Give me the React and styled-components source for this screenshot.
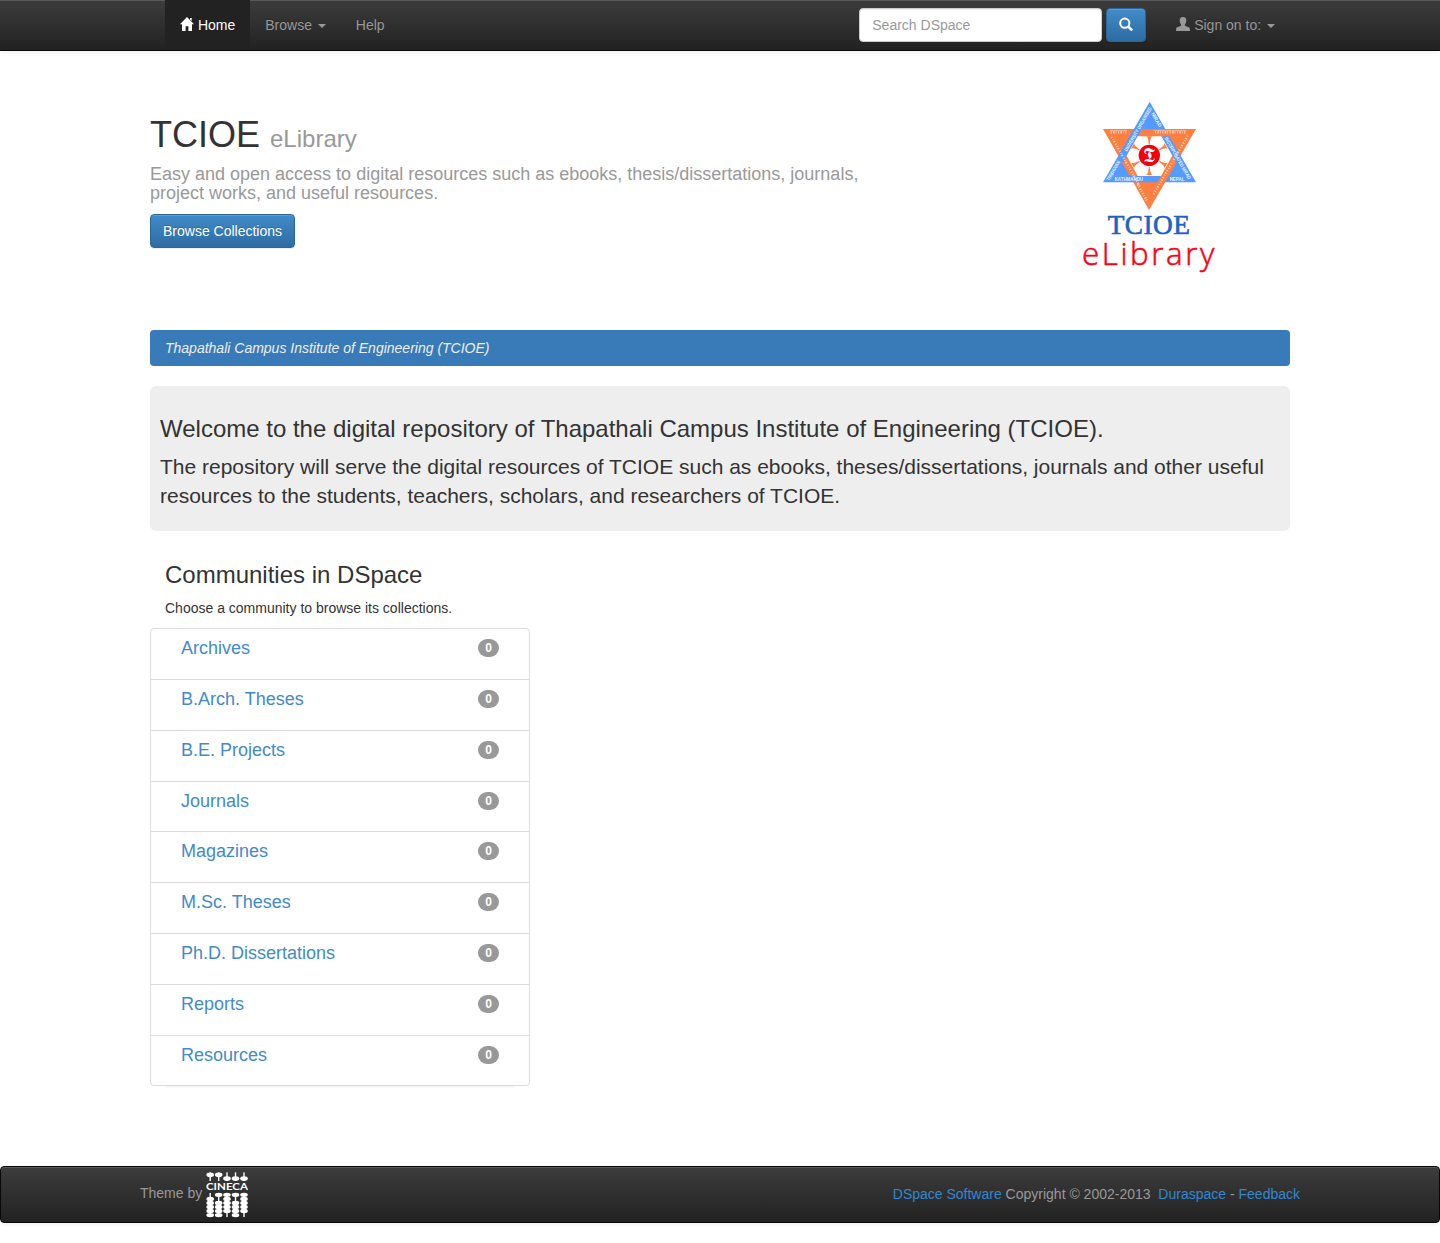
import React from "react";
import styled, { createGlobalStyle } from "styled-components";

const GlobalStyle = createGlobalStyle`
  *, *::before, *::after { box-sizing: border-box; }
  body {
    margin: 0;
    background: #fff;
    color: #333;
    font: 14px/1.428571429 "Liberation Sans", Arial, sans-serif;
  }
  a { color: #428bca; text-decoration: none; }
  h1, h3, h4, p, ul { margin: 0; padding: 0; font-weight: 500; }
  p { font-weight: 400; }
`;

const Navbar = styled.header`
  height: 51px;
  border-bottom: 1px solid #080808;
  background: linear-gradient(to bottom, #3c3c3c 0%, #222 100%);
  box-shadow: inset 0 1px 0 rgba(255, 255, 255, 0.15), 0 1px 5px rgba(0, 0, 0, 0.075);
`;

const NavInner = styled.div`
  width: 1140px;
  height: 50px;
  margin: 0 auto;
  padding-left: 15px;
  display: flex;
  justify-content: space-between;
`;

const NavGroup = styled.nav`
  display: flex;
`;

const NavLink = styled.a`
  display: block;
  height: 50px;
  padding: 15px;
  line-height: 20px;
  white-space: nowrap;
  text-shadow: 0 -1px 0 rgba(0, 0, 0, 0.25);
  color: ${(p) => (p.$active ? "#fff" : "#999")};
  background: ${(p) => (p.$active ? "#222" : "none")};
`;

const Caret = styled.b`
  display: inline-block;
  margin-left: 2px;
  vertical-align: middle;
  border-top: 4px solid currentColor;
  border-left: 4px solid transparent;
  border-right: 4px solid transparent;
`;

const Glyph = styled.svg`
  display: inline-block;
  width: 14px;
  height: 14px;
  vertical-align: -1px;
  fill: currentColor;
`;

const SearchForm = styled.form`
  display: flex;
  gap: 4px;
  padding: 8px 0;
  margin-right: 15px;
`;

const SearchInput = styled.input`
  width: 243px;
  height: 34px;
  padding: 6px 12px;
  border: 1px solid #ccc;
  border-radius: 4px;
  background: #fff;
  color: #555;
  font: inherit;
  box-shadow: inset 0 1px 1px rgba(0, 0, 0, 0.075);
  &::placeholder { color: #999; opacity: 1; }
`;

const PrimaryButton = styled.button`
  height: 34px;
  padding: 6px 12px;
  border: 1px solid #2b669a;
  border-radius: 4px;
  background: linear-gradient(to bottom, #428bca 0%, #2d6ca2 100%);
  box-shadow: inset 0 1px 0 rgba(255, 255, 255, 0.15), 0 1px 1px rgba(0, 0, 0, 0.075);
  color: #fff;
  font: inherit;
  line-height: 20px;
  text-shadow: 0 -1px 0 rgba(0, 0, 0, 0.2);
`;

const Container = styled.div`
  width: 1140px;
  margin: 0 auto;
`;

const Banner = styled.section`
  display: flex;
  justify-content: space-between;
  height: 279px;
  padding-top: 44px;
`;

const Brand = styled.div`
  width: 730px;
  padding-top: 19.6px;
`;

const SiteTitle = styled.h1`
  font-size: 36px;
  line-height: 39.6px;
  margin-bottom: 10.4px;
  small {
    color: #999;
    font-size: 24px;
    line-height: 1;
    font-weight: 400;
  }
`;

const Tagline = styled.h4`
  font-size: 18px;
  line-height: 19.4px;
  color: #999;
  margin-bottom: 10.4px;
`;

const Logo = styled.svg`
  display: block;
  width: 150px;
  height: 185px;
  margin-right: 65px;
`;

const Breadcrumb = styled.div`
  height: 36px;
  padding: 8px 15px;
  margin-bottom: 20px;
  border-radius: 4px;
  background: #387bb8;
  color: #eee;
  font-style: italic;
  line-height: 20px;
`;

const Jumbotron = styled.section`
  height: 145.2px;
  padding: 30px 10px 10px;
  border-radius: 6px;
  background: #eee;
  h3 { font-size: 24px; line-height: 26.4px; margin-bottom: 10px; }
  p { font-size: 21px; line-height: 29px; }
`;

const Communities = styled.section`
  width: 380px;
  padding-top: 30.6px;
  margin-bottom: 80px;
`;

const CommunitiesHead = styled.div`
  padding: 0 15px;
  h3 { font-size: 24px; line-height: 26.4px; margin-bottom: 10px; }
  p { line-height: 20px; margin-bottom: 10px; }
`;

const ListShadow = styled.div`
  margin: 0 15px;
  box-shadow: 0 1px 2px rgba(0, 0, 0, 0.075);
`;

const List = styled.ul`
  list-style: none;
  margin: 0 -15px;
`;

const Item = styled.li`
  display: flex;
  justify-content: space-between;
  align-items: flex-start;
  height: 51.8px;
  margin-bottom: -1px;
  padding: 10px 30px;
  border: 1px solid #ddd;
  background: #fff;
  &:first-child { border-radius: 4px 4px 0 0; }
  &:last-child { border-radius: 0 0 4px 4px; margin-bottom: 0; }
  h4 { font-size: 18px; line-height: 19.8px; }
`;

const Badge = styled.span`
  min-width: 10px;
  padding: 3px 7px;
  border-radius: 10px;
  background: #999;
  color: #fff;
  font-size: 12px;
  font-weight: 700;
  line-height: 12px;
  text-align: center;
`;

const Footer = styled.footer`
  height: 57px;
  margin-bottom: 20px;
  border: 1px solid #080808;
  border-radius: 4px;
  background: linear-gradient(to bottom, #3c3c3c 0%, #222 100%);
  box-shadow: inset 0 1px 0 rgba(255, 255, 255, 0.15), 0 1px 5px rgba(0, 0, 0, 0.075);
  color: #999;
`;

const FooterInner = styled.div`
  width: 1160px;
  height: 55px;
  margin: 0 auto;
  padding-bottom: 2px;
  display: flex;
  justify-content: space-between;
  align-items: center;
`;

const Credit = styled.div`
  display: flex;
  align-items: flex-start;
  gap: 4px;
  padding-top: 2px;
  span { padding-top: 11px; }
  svg { display: block; }
`;

const Legal = styled.p`
  white-space: pre;
  a { color: #3088d2; }
`;

const HomeIcon = () => (
  <Glyph viewBox="0 0 14 14">
    <path d="M7 0 L14 7.3 H12 V14 H8.4 V9.3 H5.6 V14 H2 V7.3 H0 Z M10 0.9 h1.7 v3.2 l-1.7 -1.7z" />
  </Glyph>
);

const SearchIcon = () => (
  <Glyph viewBox="0 0 14 14">
    <circle cx="5.8" cy="6.2" r="4.6" fill="none" stroke="currentColor" strokeWidth="2" />
    <path d="M9 9.4 L13.2 13.4" stroke="currentColor" strokeWidth="2.5" />
  </Glyph>
);

const UserIcon = () => (
  <Glyph viewBox="0 0 14 14">
    <path d="M7 0 C9.4 0 10.4 1.6 10.3 3.6 C10.3 5.3 9.8 6.5 8.9 7.3 V8.6 C9.8 9.6 13.4 10 13.8 11.4 L14 14 H0 L0.2 11.4 C0.6 10 4.2 9.6 5.1 8.6 V7.3 C4.2 6.5 3.7 5.3 3.7 3.6 C3.6 1.6 4.6 0 7 0 Z" />
  </Glyph>
);

const BLUE = "#559bff";
const ORANGE = "#ff7f40";

const EmblemText = ({ x, y, angle = 0, length, children }) => (
  <text
    transform={`translate(${x} ${y}) rotate(${angle})`}
    textLength={length}
    lengthAdjust="spacingAndGlyphs"
    fontSize="15"
    fontWeight="700"
    fontFamily="Liberation Sans, sans-serif"
    fill="#fff"
    fillOpacity="0.9"
  >
    {children}
  </text>
);

const LibraryLogo = () => (
  <Logo viewBox="0 0 450 555">
    <path d="M224 20 L363 262 H84 Z" fill={BLUE} />
    <path d="M84 102 H363 L222 345 Z" fill={ORANGE} />
    <path d="M176 102 H201 L142 204 L130 182 Z" fill={BLUE} />
    <path d="M259 124 H284 L317 182 L305 204 Z" fill={BLUE} />
    <path d="M164 243 H258 L247 262 H175 Z" fill={BLUE} />
    <path d="M188 124 H259 L292 182 L258 243 H188 L155 182 Z" fill="#fff" />
    {[0, 60, 120, 180, 240, 300].map((a) => (
      <path
        key={a}
        d="M-11 -58 C-4 -56 -3 -48 -1.5 -34 H1.5 C3 -48 4 -56 11 -58 Z"
        transform={`translate(223 182) rotate(${a})`}
        fill={ORANGE}
      />
    ))}
    <circle cx="223" cy="181" r="32" fill="#f5000c" />
    <text x="223" y="202" textAnchor="middle" fontSize="60" fontFamily="DejaVu Sans, serif" fill="#fff">𝕿</text>
    <EmblemText x={103} y={258} angle={-60} length={66}>TRIBHUVAN</EmblemText>
    <EmblemText x={156} y={170} angle={-60} length={150}>UNIVERSITY ORGANISED</EmblemText>
    <EmblemText x={228} y={56} angle={60} length={48}>NIRAD</EmblemText>
    <EmblemText x={268} y={130} angle={60} length={143}>INCORPORATED NIRAD</EmblemText>
    <EmblemText x={119} y={257} length={85}>KATHMANDU</EmblemText>
    <EmblemText x={284} y={257} length={44}>NEPAL</EmblemText>
    <g stroke="#fff" fill="none" strokeOpacity="0.65">
      <path d="M105 107 H155 M238 107 H333" strokeWidth="2" />
      <path d="M107 112 H155 M240 112 H333" strokeWidth="7" strokeDasharray="3 4 5 3 2 5" />
      <path d="M110 126 L194 273" strokeWidth="7" strokeDasharray="3 5 2 4 4 6" />
      <path d="M338 122 L236 298" strokeWidth="7" strokeDasharray="3 5 4 4 2 6" />
      <path d="M188 268 L216 318" strokeWidth="8" strokeDasharray="4 4 2 5" />
    </g>
    <text x="98" y="417" textLength="247" fontSize="82" fontFamily="Liberation Serif, serif" fill="#2161c4" stroke="#2161c4" strokeWidth="1.8">TCIOE</text>
    <text x="21" y="510" textLength="397" fontSize="94" fontFamily="Open Sans, Noto Sans, sans-serif" fontWeight="300" fill="#fb0012" stroke="#fb0012" strokeWidth="1.6">eLibrary</text>
  </Logo>
);

const COLUMNS = [
  { x: 4.2, up: true, beads: [2, 3, 4, 5, 6] },
  { x: 12.7, up: true, beads: [1, 3, 4, 5, 6] },
  { x: 21, up: false, beads: [1, 2, 3, 4, 5] },
  { x: 29.5, up: false, beads: [1, 3, 4, 5, 6] },
  { x: 38, up: false, beads: [1, 2, 3, 4, 5] },
];

const CinecaLogo = () => (
  <svg width="42" height="46" viewBox="0 0 42 46" fill="#fff">
    {COLUMNS.map(({ x, up, beads }) => (
      <g key={x}>
        <ellipse cx={x} cy={up ? 2.8 : 6.6} rx="3.8" ry="2.4" />
        <rect x={x - 0.7} y="0.4" width="1.4" height="8.6" />
        <rect x={x - 0.7} y="21" width="1.4" height="24" />
        {beads.map((b) => (
          <ellipse key={b} cx={x} cy={18.8 + b * 4.05} rx="3.8" ry="2.2" />
        ))}
      </g>
    ))}
    <text x="0" y="18.3" textLength="42" lengthAdjust="spacingAndGlyphs" fontSize="8.8" fontWeight="700" fontFamily="Lato, sans-serif">CINECA</text>
  </svg>
);

const COMMUNITIES = [
  "Archives",
  "B.Arch. Theses",
  "B.E. Projects",
  "Journals",
  "Magazines",
  "M.Sc. Theses",
  "Ph.D. Dissertations",
  "Reports",
  "Resources",
];

export default function App() {
  return (
    <>
      <GlobalStyle />
      <Navbar>
        <NavInner>
          <NavGroup>
            <NavLink $active><HomeIcon /> Home</NavLink>
            <NavLink>Browse <Caret /></NavLink>
            <NavLink>Help</NavLink>
          </NavGroup>
          <NavGroup>
            <SearchForm>
              <SearchInput placeholder="Search DSpace" />
              <PrimaryButton type="button" aria-label="Search"><SearchIcon /></PrimaryButton>
            </SearchForm>
            <NavLink><UserIcon /> Sign on to: <Caret /></NavLink>
          </NavGroup>
        </NavInner>
      </Navbar>
      <Container>
        <Banner>
          <Brand>
            <SiteTitle>TCIOE <small>eLibrary</small></SiteTitle>
            <Tagline>
              Easy and open access to digital resources such as ebooks, thesis/dissertations, journals, project works, and useful resources.
            </Tagline>
            <PrimaryButton type="button">Browse Collections</PrimaryButton>
          </Brand>
          <LibraryLogo />
        </Banner>
        <Breadcrumb>Thapathali Campus Institute of Engineering (TCIOE)</Breadcrumb>
        <Jumbotron>
          <h3>Welcome to the digital repository of Thapathali Campus Institute of Engineering (TCIOE).</h3>
          <p>
            The repository will serve the digital resources of TCIOE such as ebooks, theses/dissertations, journals and other useful resources to the students, teachers, scholars, and researchers of TCIOE.
          </p>
        </Jumbotron>
        <Communities>
          <CommunitiesHead>
            <h3>Communities in DSpace</h3>
            <p>Choose a community to browse its collections.</p>
          </CommunitiesHead>
          <ListShadow>
            <List>
              {COMMUNITIES.map((name) => (
                <Item key={name}>
                  <h4><a>{name}</a></h4>
                  <Badge>0</Badge>
                </Item>
              ))}
            </List>
          </ListShadow>
        </Communities>
      </Container>
      <Footer>
        <FooterInner>
          <Credit><span>Theme by</span> <CinecaLogo /></Credit>
          <Legal>
            <a>DSpace Software</a>{" Copyright © 2002-2013 \u00a0"}<a>Duraspace</a>{" - "}<a>Feedback</a>
          </Legal>
        </FooterInner>
      </Footer>
    </>
  );
}
